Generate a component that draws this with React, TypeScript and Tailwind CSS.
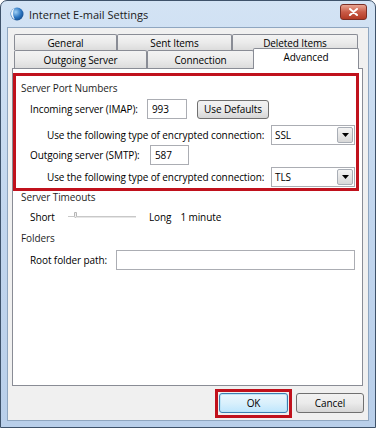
import React from "react";

function Select({ value }: { value: string }) {
  return (
    <div className="flex h-[20px] w-[84px] items-center border border-[#abadb3] bg-white pl-[3px]">
      <span className="flex-1 text-[10px] leading-none">{value}</span>
      <div className="mr-[1px] flex h-[16px] w-[16px] items-center justify-center rounded-[2px] border border-[#a9aeb6] bg-gradient-to-b from-[#f4f4f4] to-[#d8d8d8]">
        <svg width="7" height="4" viewBox="0 0 7 4">
          <path d="M0 0h7L3.5 4z" fill="#000" />
        </svg>
      </div>
    </div>
  );
}

function GroupLabel({ text }: { text: string }) {
  return (
    <div className="flex items-center gap-[4px]">
      <span className="text-[10px] leading-none text-[#1e1e1e]">{text}</span>
      <div className="h-px flex-1 border-b border-white bg-[#d5dfe5]" />
    </div>
  );
}

function Tab({ label, w, selected }: { label: string; w: number; selected?: boolean }) {
  return (
    <div
      style={{ width: w }}
      className={
        selected
          ? "relative z-10 -mb-px -ml-px flex h-[21px] items-start justify-center rounded-t-[2px] border border-b-0 border-[#898c95] bg-white pt-[3px] text-[10px] leading-none"
          : "flex h-full items-center justify-center rounded-t-[2px] border border-b-0 border-[#898c95] bg-gradient-to-b from-[#f3f3f3] via-[#ebebeb] to-[#dcdcdc] text-[10px] leading-none"
      }
    >
      {label}
    </div>
  );
}

export default function App() {
  return (
    <div className="h-[435px] w-[376px] bg-white font-['Open_Sans',sans-serif] tracking-[-0.1px] text-black">
      <div className="flex h-[428px] flex-col rounded-t-[7px] border border-[#3e526a] bg-gradient-to-b from-[#d3e3f4] via-[#c2d6ee] to-[#b9cfea]">
        {/* title bar */}
        <div className="flex h-[26px] items-center pl-[9px] pr-[8px]">
          <svg width="14" height="14" viewBox="0 0 14 14">
            <defs>
              <radialGradient id="g" cx="0.4" cy="0.35" r="0.7">
                <stop offset="0" stopColor="#9fd0f5" />
                <stop offset="0.6" stopColor="#2a74c0" />
                <stop offset="1" stopColor="#124a8a" />
              </radialGradient>
            </defs>
            <circle cx="7" cy="7" r="6.5" fill="url(#g)" />
            <path d="M5 1.2C2.5 3 2.3 9 5.2 12.6 3.4 12 1.2 10 1 7 .9 4.2 2.8 1.9 5 1.2z" fill="#fff" opacity="0.9" />
          </svg>
          <span className="ml-[5px] text-[11px] leading-none tracking-normal text-[#1a1a1a]">Internet E-mail Settings</span>
          <div className="ml-auto mt-[-4px] flex h-[16px] w-[27px] items-center justify-center rounded-[3px] border border-[#7b2e25] bg-gradient-to-b from-[#e8a593] via-[#c95b47] to-[#b33a24]">
            <svg width="9" height="8" viewBox="0 0 9 8">
              <path d="M1 1l7 6M8 1L1 7" stroke="#fff" strokeWidth="2" strokeLinecap="round" />
            </svg>
          </div>
        </div>

        {/* client area */}
        <div className="mx-[6px] mb-[6px] flex flex-1 flex-col border border-[#8fa6c0] bg-[#f0f0f0]">
          {/* tabs */}
          <div className="ml-[6px] mt-[6px] flex h-[16px]">
            <Tab label="General" w={103} />
            <Tab label="Sent Items" w={115} />
            <Tab label="Deleted Items" w={126} />
          </div>
          <div className="ml-[6px] flex h-[18px] items-end">
            <div className="flex h-[18px]">
              <Tab label="Outgoing Server" w={133} />
              <Tab label="Connection" w={107} />
            </div>
            <Tab label="Advanced" w={106} selected />
          </div>

          {/* panel */}
          <div className="ml-[4px] mr-[5px] flex h-[318px] flex-col border border-[#898c95] bg-white">
            <div className="mt-[4px] flex h-[118px] w-[346px] flex-col border-[3px] border-[#c0111c] pl-[5px] pr-[5px] pt-[4px]">
              <div className="flex h-[16px] items-center">
                <div className="flex-1">
                  <GroupLabel text="Server Port Numbers" />
                </div>
              </div>
              <div className="mt-[3px] flex h-[20px] items-center pl-[9px]">
                <span className="w-[117px] text-[10px] leading-none">Incoming server (IMAP):</span>
                <div className="flex h-[20px] w-[40px] items-center border border-[#abadb3] bg-white pl-[4px] text-[10px] leading-none">993</div>
                <div className="ml-[10px] flex h-[19px] w-[72px] items-center justify-center rounded-[3px] border border-[#707070] bg-gradient-to-b from-[#f2f2f2] via-[#ebebeb] to-[#d6d6d6] text-[10px] leading-none">
                  Use Defaults
                </div>
              </div>
              <div className="mt-[6px] flex h-[20px] items-center pl-[26px]">
                <span className="flex-1 text-[10px] leading-none">Use the following type of encrypted connection:</span>
                <div className="-mr-[4px]">
                  <Select value="SSL" />
                </div>
              </div>
              <div className="flex h-[20px] items-center pl-[9px]">
                <span className="w-[120px] text-[10px] leading-none">Outgoing server (SMTP):</span>
                <div className="flex h-[20px] w-[39px] items-center border border-[#abadb3] bg-white pl-[4px] text-[10px] leading-none">587</div>
              </div>
              <div className="mt-[2px] flex h-[20px] items-center pl-[26px]">
                <span className="flex-1 text-[10px] leading-none">Use the following type of encrypted connection:</span>
                <div className="-mr-[4px]">
                  <Select value="TLS" />
                </div>
              </div>
            </div>

            <div className="mt-[-1px] flex h-[14px] items-center pl-[8px] pr-[8px]">
              <div className="flex-1">
                <GroupLabel text="Server Timeouts" />
              </div>
            </div>
            <div className="mt-[5px] flex h-[16px] items-center pl-[17px]">
              <span className="w-[36px] text-[10px] leading-none">Short</span>
              <div className="flex w-[70px] flex-col">
                <div className="flex items-end">
                  <div className="ml-[2px] h-[2px] w-[6px] border-t border-[#c8c8c8]" />
                  <div className="h-[6px] w-[3px] rounded-b-[2px] border border-[#b6b6b6] bg-[#f0f0f0]" />
                  <div className="h-[2px] flex-1 border-b border-[#e6e6e6] bg-[#c8c8c8]" />
                </div>
                <div className="h-[4px]" />
              </div>
              <span className="ml-[13px] text-[10px] leading-none">Long</span>
              <span className="ml-[9px] text-[10px] leading-none">1 minute</span>
            </div>
            <div className="mt-[6px] flex h-[14px] items-center pl-[8px] pr-[8px]">
              <div className="flex-1">
                <GroupLabel text="Folders" />
              </div>
            </div>
            <div className="mt-[5px] flex h-[20px] items-center pl-[17px] pr-[7px]">
              <span className="w-[86px] text-[10px] leading-none">Root folder path:</span>
              <div className="h-[20px] flex-1 border border-[#abadb3] bg-white" />
            </div>
          </div>

          {/* buttons */}
          <div className="mt-[3px] flex items-start justify-end pr-[4px]">
            <div className="flex h-[29px] w-[77px] items-start border-[3px] border-[#c0111c] pl-[1px] pt-[1px]">
              <div className="flex h-[20px] w-[69px] items-center justify-center rounded-[3px] border border-[#3c7fb1] bg-gradient-to-b from-[#eaf6fd] via-[#d9f0fc] to-[#bee6fd] text-[10px] leading-none shadow-[inset_0_0_0_1px_#bde4f7]">
                OK
              </div>
            </div>
            <div className="ml-[4px] mt-[4px] flex h-[20px] w-[68px] items-center justify-center rounded-[3px] border border-[#707070] bg-gradient-to-b from-[#f2f2f2] via-[#ebebeb] to-[#d6d6d6] text-[10px] leading-none">
              Cancel
            </div>
          </div>
        </div>
      </div>
    </div>
  );
}
